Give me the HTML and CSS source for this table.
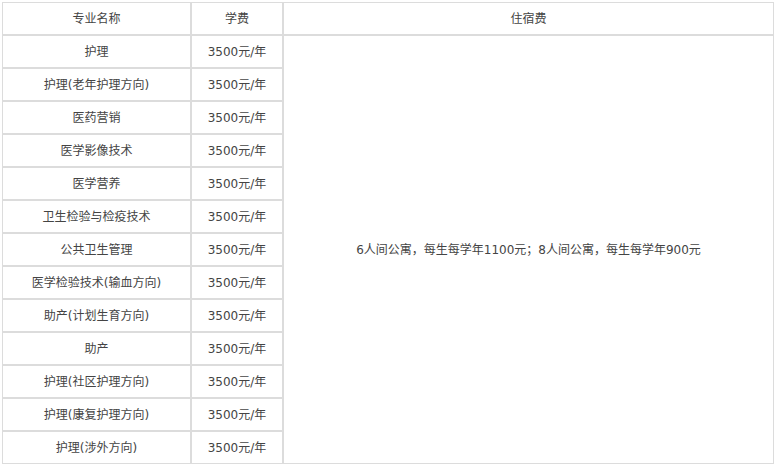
FILE: index.html
```html
<!DOCTYPE html>
<html lang="zh">
<head>
<meta charset="utf-8">
<title>收费标准</title>
<link rel="stylesheet" href="styles.css">
</head>
<body>
<table class="fees">
  <colgroup>
    <col class="c-name">
    <col class="c-fee">
    <col class="c-dorm">
  </colgroup>
  <thead>
    <tr><th>专业名称</th><th>学费</th><th>住宿费</th></tr>
  </thead>
  <tbody>
    <tr><td>护理</td><td>3500元/年</td><td rowspan="13">6人间公寓，每生每学年1100元；8人间公寓，每生每学年900元</td></tr>
    <tr><td>护理(老年护理方向)</td><td>3500元/年</td></tr>
    <tr><td>医药营销</td><td>3500元/年</td></tr>
    <tr><td>医学影像技术</td><td>3500元/年</td></tr>
    <tr><td>医学营养</td><td>3500元/年</td></tr>
    <tr><td>卫生检验与检疫技术</td><td>3500元/年</td></tr>
    <tr><td>公共卫生管理</td><td>3500元/年</td></tr>
    <tr><td>医学检验技术(输血方向)</td><td>3500元/年</td></tr>
    <tr><td>助产(计划生育方向)</td><td>3500元/年</td></tr>
    <tr><td>助产</td><td>3500元/年</td></tr>
    <tr><td>护理(社区护理方向)</td><td>3500元/年</td></tr>
    <tr><td>护理(康复护理方向)</td><td>3500元/年</td></tr>
    <tr><td>护理(涉外方向)</td><td>3500元/年</td></tr>
  </tbody>
</table>
</body>
</html>
```
FILE: styles.css
```css
html, body {
  margin: 0;
  background: #fff;
}
body {
  padding: 2px;
  font-family: "DejaVu Sans", "Noto Sans CJK SC", sans-serif;
  font-size: 12px;
  color: #444;
}
.fees {
  border-collapse: separate;
  border-spacing: 0;
  table-layout: fixed;
  width: 772px;
}
.c-name { width: 189px; }
.c-fee { width: 92px; }
.c-dorm { width: 491px; }
.fees th,
.fees td {
  border: 1px solid #dcdcdc;
  height: 31px;
  padding: 0;
  text-align: center;
  vertical-align: middle;
  font-weight: normal;
  line-height: 16px;
}
```
